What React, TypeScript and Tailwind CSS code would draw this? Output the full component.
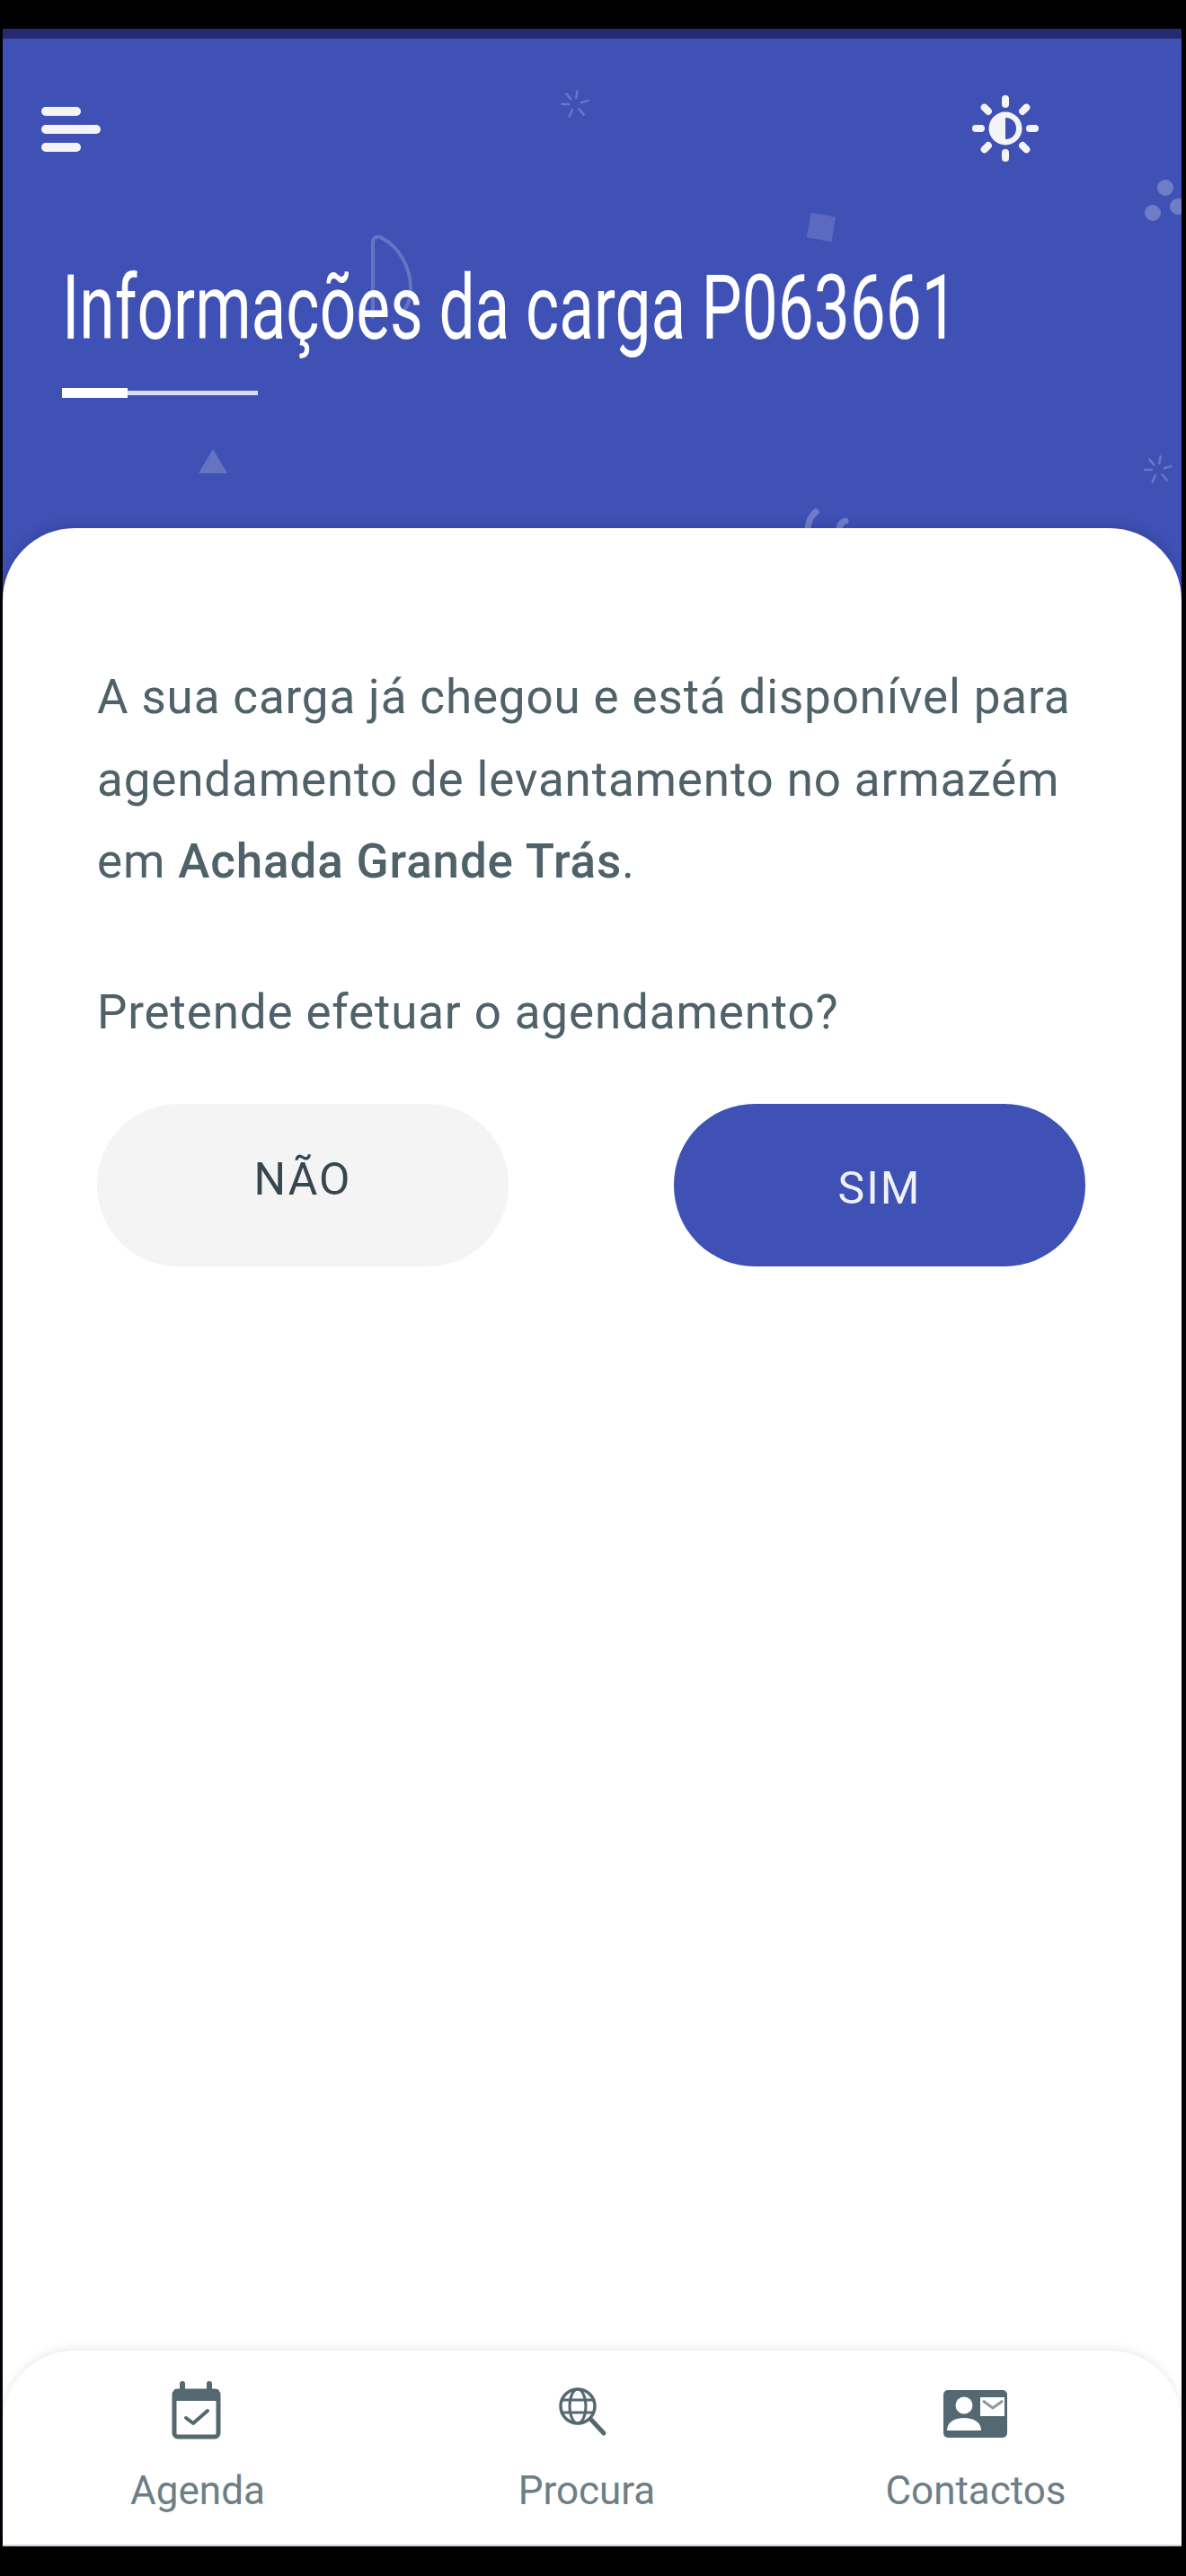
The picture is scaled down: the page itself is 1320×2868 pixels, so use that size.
// Cargo details screen
const SPARK_ANGLES = [10, 75, 140, 205, 270, 320];

function Spark({ cx, cy }: { cx: number; cy: number }) {
  return (
    <g stroke="#fff" strokeOpacity="0.22" strokeWidth="2.5" strokeLinecap="round">
      {SPARK_ANGLES.map((deg) => (
        <line
          key={deg}
          x1={cx}
          y1={cy - 7}
          x2={cx}
          y2={cy - 15}
          transform={`rotate(${deg} ${cx} ${cy})`}
        />
      ))}
    </g>
  );
}

function Decorations() {
  return (
    <svg
      className="absolute inset-0 w-full h-full"
      viewBox="3 43 1312 545"
      fill="none"
    >
      <path d="M415 270c0-6 5-8 10-5 20 10 32 34 32 55 0 14-4 24-12 30M415 270v85" stroke="#fff" strokeOpacity="0.2" strokeWidth="4" />
      <path d="M237 500l16 27h-32z" fill="#fff" fillOpacity="0.2" />
      <rect x="900" y="239" width="28" height="28" transform="rotate(10 914 253)" fill="#fff" fillOpacity="0.15" />
      <circle cx="1297" cy="209" r="9" fill="#fff" fillOpacity="0.25" />
      <circle cx="1283" cy="237" r="9" fill="#fff" fillOpacity="0.25" />
      <circle cx="1311" cy="230" r="9" fill="#fff" fillOpacity="0.25" />
      <Spark cx={640} cy={116} />
      <Spark cx={1289} cy={523} />
      <path d="M899 588c1-8 4-14 9-18M934 588c1-4 3-7 7-8" stroke="#fff" strokeOpacity="0.25" strokeWidth="7" strokeLinecap="round" />
    </svg>
  );
}

function ThemeIcon() {
  const rays = [0, 45, 90, 135, 180, 225, 270, 315];
  return (
    <svg className="w-[80px] h-[80px]" viewBox="0 0 80 80">
      <g stroke="#f4f4f6" strokeWidth="8" strokeLinecap="round">
        {rays.map((deg) => (
          <line key={deg} x1="40" y1="7" x2="40" y2="13" transform={`rotate(${deg} 40 40)`} />
        ))}
      </g>
      <circle cx="40" cy="40" r="18.5" fill="#f4f4f6" />
      <path d="M40 28c8 0 12 6 12 12s-4 12-12 12z" fill="#3f51b5" />
    </svg>
  );
}

function CalendarIcon() {
  return (
    <svg className="w-[100px] h-[90px]" viewBox="0 0 100 90" fill="none">
      <path d="M33 14v8M63 14v8" stroke="#546871" strokeWidth="6" strokeLinecap="round" />
      <rect x="24" y="22" width="49" height="51" rx="4" stroke="#546871" strokeWidth="5" />
      <path d="M24 20h49v13H24z" fill="#546871" />
      <path d="M37 52l8 6 16-14" stroke="#546871" strokeWidth="4" strokeLinecap="round" strokeLinejoin="round" />
    </svg>
  );
}

function GlobeSearchIcon() {
  return (
    <svg className="w-[100px] h-[90px]" viewBox="0 0 100 90" fill="none" stroke="#546871">
      <circle cx="40" cy="39" r="19" strokeWidth="3.5" />
      <ellipse cx="40" cy="39" rx="9" ry="19" strokeWidth="3" />
      <path d="M21 32h38M21 46h38" strokeWidth="3" />
      <path d="M55 54l14 15" strokeWidth="5" strokeLinecap="round" />
    </svg>
  );
}

function ContactCardIcon() {
  return (
    <svg className="w-[100px] h-[90px]" viewBox="0 0 100 90">
      <rect x="14" y="21" width="71" height="53" rx="5" fill="#546871" />
      <circle cx="37" cy="38" r="9.5" fill="#fff" />
      <path d="M18 66c0-9 8-14 19-14s19 5 19 14z" fill="#fff" />
      <rect x="55" y="29" width="27" height="21" fill="#fff" />
      <path d="M58 33l11 8 11-8" fill="none" stroke="#8a9aa1" strokeWidth="3" />
    </svg>
  );
}

function NavItem({ icon, label }: { icon: React.ReactNode; label: string }) {
  return (
    <div className="flex flex-col items-center w-[433px]">
      {icon}
      <span className="font-['Roboto',sans-serif] text-[44px] leading-[56px] mt-[15px] text-[#6d7e86]">
        {label}
      </span>
    </div>
  );
}

export default function App() {
  return (
    <div className="h-[2868px] bg-black pt-[32px] pb-[33px] pl-[3px] pr-[5px]">
      <div className="h-full flex flex-col bg-[#3f51b5]">
        <div className="h-[11px] bg-[#262a70]" />

        <header className="relative h-[545px] shrink-0 overflow-hidden">
          <Decorations />
          <div className="relative flex items-start justify-between pl-[43px] pr-[156px] pt-[60px]">
            <div className="flex flex-col gap-[10px] pt-[16px]">
              <div className="w-[44px] h-[10px] rounded-full bg-[#f4f4f6]" />
              <div className="w-[66px] h-[10px] rounded-full bg-[#f4f4f6]" />
              <div className="w-[44px] h-[10px] rounded-full bg-[#f4f4f6]" />
            </div>
            <ThemeIcon />
          </div>
          <div className="relative pl-[66px] pt-[100px]">
            <h1 className="w-fit font-['Roboto',sans-serif] text-[101px] leading-[120px] font-normal text-white whitespace-nowrap origin-left scale-x-[0.705]">
              Informações da carga P063661
            </h1>
            <div className="flex items-center mt-[29px]">
              <div className="w-[73px] h-[11px] bg-white" />
              <div className="w-[145px] h-[5px] bg-[#d8dcf0]" />
            </div>
          </div>
        </header>

        <main className="flex-1 flex flex-col justify-between bg-white rounded-t-[80px] overflow-hidden shadow-[0_-4px_12px_rgba(30,40,110,0.25)]">
          <div className="pl-[105px] pr-[107px] pt-[143px] font-['Roboto',sans-serif] text-[#4f6169]">
            <p className="text-[53px] leading-[91.5px] tracking-[0.84px]">
              A sua carga já chegou e está disponível para agendamento de levantamento no armazém em{" "}
              <span className="font-medium">Achada Grande Trás</span>.
            </p>
            <p className="text-[53px] leading-[91.5px] tracking-[0.84px] mt-[76px]">
              Pretende efetuar o agendamento?
            </p>
            <div className="flex justify-between mt-[56px]">
              <button className="w-[458px] h-[181px] rounded-[90px] bg-[#f4f4f5] pb-[12px] text-[50px] tracking-[2px] text-[#37474f]">
                NÃO
              </button>
              <button className="w-[458px] h-[181px] rounded-[90px] bg-[#3f51b5] pt-[8px] text-[50px] tracking-[2px] text-[#f0f1f8]">
                SIM
              </button>
            </div>
          </div>

          <nav className="flex justify-center pt-[23px] pr-[12px] h-[218px] rounded-t-[80px] bg-white border-b-2 border-[#cfd6da] shadow-[0_-3px_10px_rgba(60,70,80,0.1)]">
            <NavItem icon={<CalendarIcon />} label="Agenda" />
            <NavItem icon={<GlobeSearchIcon />} label="Procura" />
            <NavItem icon={<ContactCardIcon />} label="Contactos" />
          </nav>
        </main>
      </div>
    </div>
  );
}
